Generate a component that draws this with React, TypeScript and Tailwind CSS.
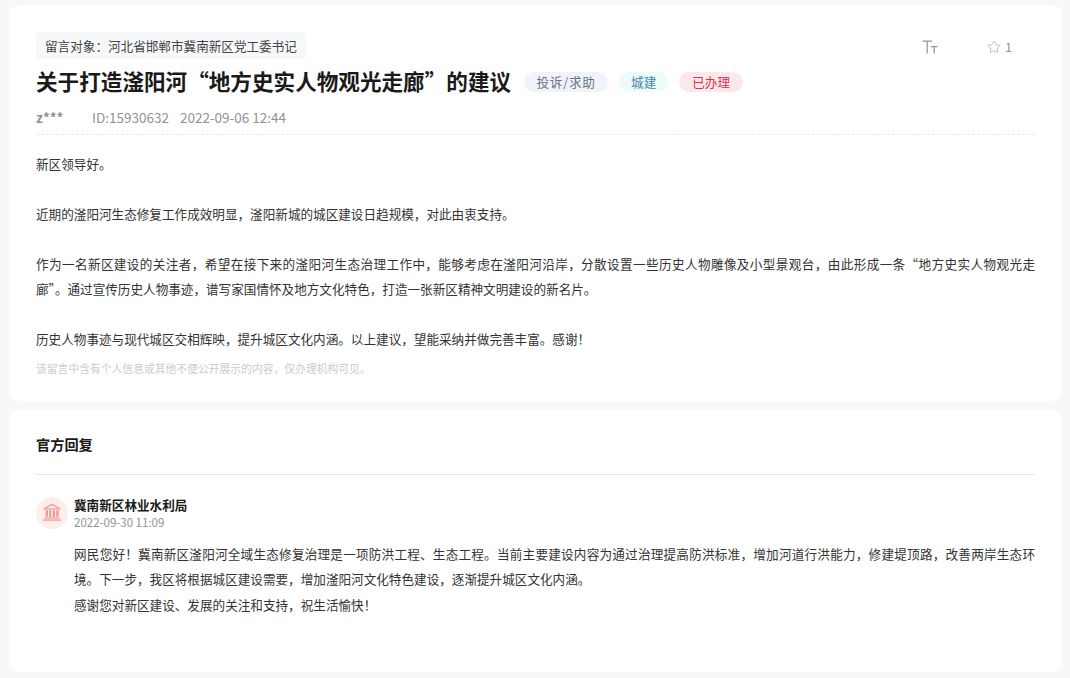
import React from 'react';
import { Star } from 'lucide-react';

const font = "font-['Noto_Sans_CJK_SC','Liberation_Sans',sans-serif]";

const body = [
  '新区领导好。',
  '',
  '近期的滏阳河生态修复工作成效明显，滏阳新城的城区建设日趋规模，对此由衷支持。',
  '',
  '作为一名新区建设的关注者，希望在接下来的滏阳河生态治理工作中，能够考虑在滏阳河沿岸，分散设置一些历史人物雕像及小型景观台，由此形成一条“地方史实人物观光走廊”。通过宣传历史人物事迹，谱写家国情怀及地方文化特色，打造一张新区精神文明建设的新名片。',
  '',
  '历史人物事迹与现代城区交相辉映，提升城区文化内涵。以上建议，望能采纳并做完善丰富。感谢！',
];

const BankIcon = () => (
  <svg width="20" height="20" viewBox="0 0 20 20" className="mb-[3px]" fill="#f19a97">
    <path d="M10 1.6 18.6 6.4v1.1H1.4V6.4zM10 3.1 4.6 6.3h10.8z" fillRule="evenodd" />
    <rect x="3.6" y="8.2" width="2.4" height="7" />
    <rect x="7.2" y="8.2" width="2.2" height="7" />
    <rect x="10.8" y="8.2" width="2.2" height="7" />
    <rect x="14.2" y="8.2" width="2.4" height="7" />
    <rect x="2.4" y="15.6" width="15.2" height="1.1" />
    <rect x="0.8" y="17.4" width="18.4" height="1.3" />
  </svg>
);

const FontSizeIcon = () => (
  <svg width="16" height="14" viewBox="0 0 16 14" fill="none" stroke="#8f9399" strokeWidth="1.2">
    <path d="M0.5 1.2H10M5.2 1.2V13.5" />
    <path d="M9 6.6H15.5M12.2 6.6V13.5" />
  </svg>
);

export default function App() {
  return (
    <div className={`min-h-[678px] bg-[#f7f8fa] pt-[5px] pr-[8px] pl-[9px] ${font}`}>
      <section className="h-[396px] rounded-[10px] bg-white px-[27px] pt-[27px]">
        <div className="flex items-start justify-between">
          <div className="inline-block h-[27px] rounded-[3px] bg-[#f7f8fa] px-[9px] text-[12.6px] leading-[27px] text-[#444]">
            留言对象：河北省邯郸市冀南新区党工委书记
          </div>
          <div className="mr-[23px] flex items-center pt-[6px] text-[12.6px] text-[#8f9399]">
            <FontSizeIcon />
            <div className="ml-[49px] flex items-center gap-[4px]">
              <Star size={14} strokeWidth={1} />
              <span>1</span>
            </div>
          </div>
        </div>
        <div className="mt-[6px] flex h-[32px] items-center">
          <h1 className="text-[21.6px] leading-[32px] font-bold text-[#1a1a1a]">关于打造滏阳河“地方史实人物观光走廊”的建议</h1>
          <span className="mt-[2px] ml-[13px] h-[20px] w-[84px] rounded-full bg-[#f0f3f9] text-center text-[12.6px] leading-[20px] tracking-[0.8px] text-[#6b7380]">投诉/求助</span>
          <span className="mt-[2px] ml-[11px] h-[20px] rounded-full bg-[#ecfcf9] px-[12px] text-[12.6px] leading-[20px] text-[#4a7fb5]">城建</span>
          <span className="mt-[2px] ml-[11px] h-[20px] rounded-full bg-[#fbe9ea] px-[13px] text-[12.6px] leading-[20px] text-[#e0304a]">已办理</span>
        </div>
        <div className="mt-[10px] flex h-[20px] items-center text-[13.5px] leading-[20px] text-[#8f9399]">
          <span className="w-[56px] font-bold">z***</span>
          <span>ID:15930632</span>
          <span className="ml-[11px]">2022-09-06 12:44</span>
        </div>
        <div className="mt-[7px] border-t border-dashed border-[#e6e8eb] pt-[16px] text-justify text-[12.6px] leading-[25px] text-[#333]">
          {body.map((line, i) => (
            <p key={i} className="min-h-[25px]">{line}</p>
          ))}
        </div>
        <p className="mt-[9px] text-[10.8px] leading-[16px] text-[#cccccc]">该留言中含有个人信息或其他不便公开展示的内容，仅办理机构可见。</p>
      </section>

      <section className="mt-[9px] h-[262px] rounded-[10px] bg-white px-[27px] pt-[24px]">
        <h2 className="text-[14.2px] leading-[20px] font-bold text-[#1a1a1a]">官方回复</h2>
        <div className="mt-[20px] border-t border-[#e6e8eb] pt-[21px]">
          <div className="flex items-center gap-[6px]">
            <div className="flex h-[32px] w-[32px] items-center justify-center rounded-full bg-[#fdeeee]">
              <BankIcon />
            </div>
            <div>
              <div className="text-[12.6px] leading-[18px] font-bold text-[#1a1a1a]">冀南新区林业水利局</div>
              <div className="text-[11.5px] leading-[16px] text-[#8f9399]">2022-09-30 11:09</div>
            </div>
          </div>
          <div className="mt-[11px] ml-[38px] text-justify text-[12.6px] leading-[25.4px] text-[#333]">
            <p>网民您好！冀南新区滏阳河全域生态修复治理是一项防洪工程、生态工程。当前主要建设内容为通过治理提高防洪标准，增加河道行洪能力，修建堤顶路，改善两岸生态环境。下一步，我区将根据城区建设需要，增加滏阳河文化特色建设，逐渐提升城区文化内涵。</p>
            <p>感谢您对新区建设、发展的关注和支持，祝生活愉快！</p>
          </div>
        </div>
      </section>
    </div>
  );
}
